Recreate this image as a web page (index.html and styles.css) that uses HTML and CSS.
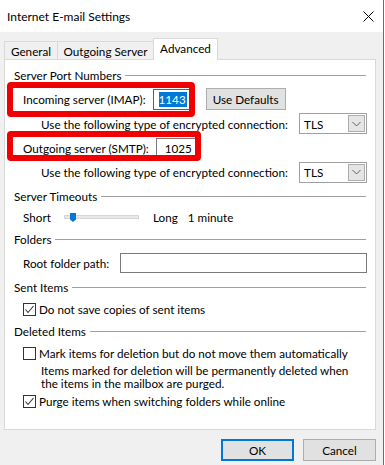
FILE: index.html
```html
<!DOCTYPE html>
<html lang="en">
<head>
  <meta charset="UTF-8" />
  <title>Internet E-mail Settings</title>
  <link rel="stylesheet" href="styles.css">
</head>
<body>
  <div class="window">
    <div class="titlebar">
      <span class="title">Internet E-mail Settings</span>
      <svg class="close" width="11" height="11" viewBox="0 0 11 11">
        <path d="M0.5 0.5 L10.5 10.5 M10.5 0.5 L0.5 10.5" stroke="#000" stroke-width="1" fill="none" />
      </svg>
    </div>

    <div class="dialog">
      <div class="tabs">
        <div class="tab tab-general">General</div>
        <div class="tab tab-outgoing">Outgoing Server</div>
        <div class="tab tab-advanced active">Advanced</div>
      </div>

      <div class="panel">
        <div class="group-title h-ports"><span>Server Port Numbers</span></div>

        <div class="row row-port row-in">
          <span class="label">Incoming server (IMAP):</span>
          <div class="field field-in focused"><span class="selected">1143</span></div>
          <button class="btn btn-defaults">Use Defaults</button>
        </div>

        <div class="row row-enc row-enc1">
          <span class="enc-label">Use the following type of encrypted connection:</span>
          <div class="combo">
            <span class="combo-value">TLS</span>
            <span class="combo-arrow">
              <svg width="9" height="6" viewBox="0 0 9 6"><path d="M0.5 1 L4.5 5 L8.5 1" stroke="#606060" stroke-width="1" fill="none" /></svg>
            </span>
          </div>
        </div>

        <div class="row row-port row-out">
          <span class="label">Outgoing server (SMTP):</span>
          <div class="field field-out">1025</div>
        </div>

        <div class="row row-enc row-enc2">
          <span class="enc-label">Use the following type of encrypted connection:</span>
          <div class="combo">
            <span class="combo-value">TLS</span>
            <span class="combo-arrow">
              <svg width="9" height="6" viewBox="0 0 9 6"><path d="M0.5 1 L4.5 5 L8.5 1" stroke="#606060" stroke-width="1" fill="none" /></svg>
            </span>
          </div>
        </div>

        <div class="group-title h-timeouts"><span>Server Timeouts</span></div>

        <div class="row row-slider">
          <span class="slider-short">Short</span>
          <div class="slider">
            <div class="track"></div>
            <svg class="thumb" width="6" height="9" viewBox="0 0 6 9"><path d="M0 0 H6 V6.5 L3 9 L0 6.5 Z" fill="#0078d7" /></svg>
          </div>
          <span class="slider-long">Long</span>
          <span class="slider-value">1 minute</span>
        </div>

        <div class="group-title h-folders"><span>Folders</span></div>

        <div class="row row-root">
          <span class="label">Root folder path:</span>
          <div class="field field-root"></div>
        </div>

        <div class="group-title h-sent"><span>Sent Items</span></div>

        <div class="row row-check row-sent">
          <span class="checkbox checked">
            <svg width="11" height="11" viewBox="0 0 11 11"><path d="M1.5 5.5 L4 8.5 L9.5 2" stroke="#333" stroke-width="1.1" fill="none" /></svg>
          </span>
          <span>Do not save copies of sent items</span>
        </div>

        <div class="group-title h-deleted"><span>Deleted Items</span></div>

        <div class="row row-check row-mark">
          <span class="checkbox"></span>
          <span>Mark items for deletion but do not move them automatically</span>
        </div>
        <p class="note">Items marked for deletion will be permanently deleted when the items in the mailbox are purged.</p>
        <div class="row row-check row-purge">
          <span class="checkbox checked">
            <svg width="11" height="11" viewBox="0 0 11 11"><path d="M1.5 5.5 L4 8.5 L9.5 2" stroke="#333" stroke-width="1.1" fill="none" /></svg>
          </span>
          <span>Purge items when switching folders while online</span>
        </div>

        <!-- red annotation boxes drawn over the screenshot -->
        <div class="mark mark-in"></div>
        <div class="mark mark-out"></div>
      </div>

      <div class="actions">
        <button class="btn btn-ok">OK</button>
        <button class="btn btn-cancel">Cancel</button>
      </div>
    </div>
  </div>
</body>
</html>
```

FILE: styles.css
```css
body {
  margin: 0;
  background: #fff;
  font-family: 'Segoe UI', Lato, sans-serif;
  font-size: 11.7px;
  color: #000;
}

.window {
  width: 383px;
  height: 465px;
  border-right: 1px solid #1a82d6;
  background: #f0f0f0;
  display: flex;
  flex-direction: column;
}

.titlebar {
  height: 32px;
  background: #fff;
  display: flex;
  align-items: center;
  justify-content: space-between;
  padding: 0 9px 0 7px;
  flex-shrink: 0;
}

.title {
  font-size: 12px;
  margin-top: 1px;
}

.close {
  margin-top: 1px;
}

.dialog {
  padding: 7px 0 0 4px;
}

/* tabs */
.tabs {
  display: flex;
  align-items: flex-end;
  height: 20px;
}

.tab {
  box-sizing: border-box;
  height: 18px;
  border: 1px solid #d9d9d9;
  border-bottom: none;
  margin-right: -1px;
  display: flex;
  align-items: center;
  justify-content: center;
  background: #f0f0f0;
}

.tab-general { width: 54px; }
.tab-outgoing { width: 97px; }

.tab.active {
  width: 65px;
  height: 22px;
  background: #fff;
  margin-bottom: -1px;
  position: relative;
  z-index: 1;
  padding-bottom: 3px;
}

.panel {
  position: relative;
  box-sizing: border-box;
  width: 372px;
  height: 371px;
  border: 1px solid #d9d9d9;
  background: #fff;
  padding: 3px 8px 0 0;
}

.group-title {
  height: 24px;
  display: flex;
  align-items: center;
  padding-left: 9px;
  margin-right: 1px;
}

.group-title::after {
  content: '';
  flex: 1;
  height: 1px;
  background: #a0a0a0;
  margin-left: 4px;
}

.h-timeouts { height: 24px; }
.h-folders { height: 26px; }
.h-sent { height: 26px; }
.h-deleted { height: 26px; }

.row {
  display: flex;
  align-items: center;
  padding-left: 18px;
  white-space: nowrap;
}

.row-in { height: 24px; }
.row-enc1 { height: 25px; }
.row-out { height: 24px; }
.row-enc2 { height: 24px; }
.row-slider { height: 18px; }
.row-root { height: 22px; }
.row-check { height: 18px; }

.row-enc {
  padding-left: 36px;
}

.label {
  margin-right: 7px;
}

.row-root .label {
  margin-right: 11px;
}

.field {
  box-sizing: border-box;
  height: 20px;
  border: 1px solid #7a7a7a;
  background: #fff;
  display: flex;
  align-items: center;
  overflow: hidden;
}

.field-in {
  width: 40px;
  height: 21px;
  padding-left: 5px;
}

.field.focused {
  border-color: #0078d7;
}

.selected {
  background: #0078d7;
  color: #fff;
  line-height: 15px;
  padding: 0 1px 0 0;
}

.field-out {
  width: 42px;
  padding-left: 8px;
}

.field-root {
  flex: 1;
}

.btn {
  box-sizing: border-box;
  height: 22px;
  background: #e1e1e1;
  border: 1px solid #adadad;
  font-family: inherit;
  font-size: 11.7px;
  color: #000;
  padding: 0;
}

.btn-defaults {
  width: 80px;
  margin-left: 13px;
}

.combo {
  box-sizing: border-box;
  margin-left: auto;
  width: 68px;
  height: 21px;
  border: 1px solid #a0a0a0;
  background: #fff;
  display: flex;
  align-items: center;
  justify-content: space-between;
  padding: 0 1px 0 4px;
}

.combo-arrow {
  box-sizing: border-box;
  width: 17px;
  height: 17px;
  background: #e5e5e5;
  border: 1px solid #adadad;
  display: flex;
  align-items: center;
  justify-content: center;
}

.slider-short {
  width: 41px;
}

.slider {
  position: relative;
  width: 75px;
  height: 9px;
  display: flex;
  align-items: center;
}

.track {
  box-sizing: border-box;
  width: 100%;
  height: 4px;
  background: #e7e7e7;
  border: 1px solid #d6d6d6;
}

.thumb {
  position: absolute;
  left: 6px;
  top: 0;
}

.slider-long {
  margin-left: 14px;
}

.slider-value {
  margin-left: 10px;
}

.checkbox {
  box-sizing: border-box;
  width: 13px;
  height: 13px;
  border: 1px solid #333;
  background: #fff;
  margin-right: 3px;
  display: flex;
  align-items: center;
  justify-content: center;
  flex-shrink: 0;
}

.note {
  margin: 0;
  padding: 2px 0 2px 36px;
  line-height: 13px;
  width: 320px;
}

.actions {
  display: flex;
  justify-content: flex-end;
  gap: 9px;
  width: 372px;
  margin-top: 9px;
}

.btn-ok,
.btn-cancel {
  width: 73px;
  height: 22px;
}

.btn-ok {
  border: 2px solid #0078d7;
}

.mark {
  position: absolute;
  box-sizing: border-box;
  border: 6px solid #f00000;
  border-radius: 4px;
  left: 2px;
}

.mark-in {
  top: 22px;
  width: 188px;
  height: 35px;
}

.mark-out {
  top: 71px;
  width: 194px;
  height: 30px;
}
```
